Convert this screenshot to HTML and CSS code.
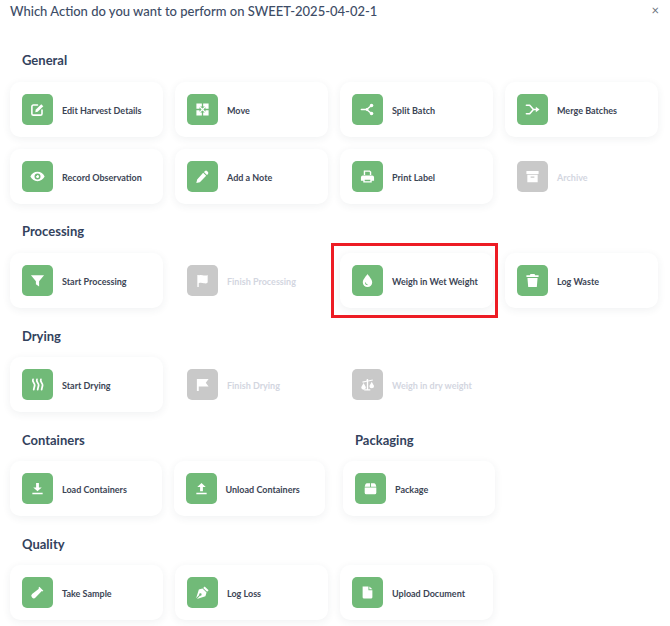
FILE: index.html
```html
<!DOCTYPE html>
<html lang="en">
<head>
<meta charset="utf-8">
<title>Actions</title>
<link rel="stylesheet" href="styles.css">
</head>
<body>
<div class="modal">
  <header class="modal-head">
    <h1 class="modal-title">Which Action do you want to perform on SWEET-2025-04-02-1</h1>
    <span class="close">×</span>
  </header>

  <section class="section first">
    <h2 class="section-title">General</h2>
    <div class="grid">
      <div class="card"><span class="icon"><svg viewBox="0 0 16 16"><path class="line" d="M8 3.200H3.600A1.600 1.600 0 0 0 2 4.800v7.600A1.600 1.600 0 0 0 3.600 14h7.600a1.600 1.600 0 0 0 1.600-1.600V8.600"/><path d="M6 8.300 12 2.300l2.200 2.200-6 6-2.500.3z"/></svg></span><span class="label">Edit Harvest Details</span></div>
      <div class="card"><span class="icon"><svg viewBox="0 0 16 16"><path fill-rule="evenodd" d="M1.500 1.500h13v13h-13zM8 7 5.500 4.800h1.800V1.500h1.400v3.300h1.800zM8 9l2.500 2.200H8.700v3.300H7.300v-3.300H5.500zM7 8 4.800 10.500V8.700H1.500V7.300h3.300V5.500zM9 8l2.200-2.500v1.800h3.300v1.400h-3.300v1.800z"/></svg></span><span class="label">Move</span></div>
      <div class="card"><span class="icon"><svg viewBox="0 0 16 16"><path class="line" d="M1.500 8H7l5-4M7 8l5 4"/><circle cx="12.300" cy="3.800" r="1.900"/><circle cx="12.300" cy="12.200" r="1.900"/><circle cx="7.500" cy="8" r="1.500"/></svg></span><span class="label">Split Batch</span></div>
      <div class="card"><span class="icon"><svg viewBox="0 0 16 16"><path class="line" d="M1.500 3.500H5L9 8l-4 4.500H1.500M9 8h3"/><path d="M11.500 5 15.500 8l-4 3z"/></svg></span><span class="label">Merge Batches</span></div>
      <div class="card"><span class="icon"><svg viewBox="0 0 16 16"><path fill-rule="evenodd" d="M8 3c3.400 0 6.300 2.200 7.600 5-1.300 2.800-4.200 5-7.600 5S1.700 10.800.4 8C1.700 5.200 4.600 3 8 3zm0 1.800a3.200 3.200 0 1 0 0 6.400 3.200 3.200 0 0 0 0-6.400zM8 6.400a1.600 1.600 0 1 1-1.500 1.100c.6.300 1.300-.3 1.100-1z"/></svg></span><span class="label">Record Observation</span></div>
      <div class="card"><span class="icon"><svg viewBox="0 0 16 16"><path d="M10.500 2.300a1.800 1.800 0 0 1 2.500 0l.7.7a1.800 1.800 0 0 1 0 2.500l-1 1-3.200-3.200zM8.700 4.100l3.200 3.200-6.700 6.700-3.800.9.900-3.800z"/></svg></span><span class="label">Add a Note</span></div>
      <div class="card"><span class="icon"><svg viewBox="0 0 16 16"><path fill-rule="evenodd" d="M4 1.500h6.500L12 3v3.500h-1.500V3.500l-.5-.5H5.500v3.500H4zM3 7h10a2 2 0 0 1 2 2v3.500h-2.500V14.500h-9V12.500H1V9a2 2 0 0 1 2-2zm2 4.500v1.500h6v-1.500z"/></svg></span><span class="label">Print Label</span></div>
      <div class="card off"><span class="icon"><svg viewBox="0 0 16 16"><path fill-rule="evenodd" d="M1.500 2h13v3.200h-13zM2.500 6.200h11V14h-11zM6 8v1.200h4V8z"/></svg></span><span class="label">Archive</span></div>
    </div>
  </section>

  <section class="section">
    <h2 class="section-title">Processing</h2>
    <div class="grid">
      <div class="card"><span class="icon"><svg viewBox="0 0 16 16"><path d="M1 2.500h14L9.700 8.800V14.500L6.300 12V8.800z"/></svg></span><span class="label">Start Processing</span></div>
      <div class="card off"><span class="icon"><svg viewBox="0 0 16 16"><path d="M2.500 2h1.500v.6c2-1 4-.3 5.500 0 1.500.3 3 .2 4-.4v8c-1 1-2.500 1-4 .7-1.800-.4-3.800-.8-5.500 0V15H2.500z"/></svg></span><span class="label">Finish Processing</span></div>
      <div class="card marked"><span class="icon"><svg viewBox="0 0 16 16"><path fill-rule="evenodd" d="M8 1c1.500 2.500 5 5.600 5 9a5 5 0 0 1-10 0c0-3.400 3.500-6.500 5-9zM5.200 10.200A2.900 2.900 0 0 0 8 13v-1a1.900 1.900 0 0 1-1.800-1.800z"/></svg></span><span class="label">Weigh in Wet Weight</span></div>
      <div class="card"><span class="icon"><svg viewBox="0 0 16 16"><path d="M5.800 1h4.400l.6 1.300H14.500v1.900h-13V2.300h3.700zM2.600 5.200h10.800l-.8 9.800H3.400z"/></svg></span><span class="label">Log Waste</span></div>
    </div>
  </section>

  <section class="section">
    <h2 class="section-title low">Drying</h2>
    <div class="grid">
      <div class="card"><span class="icon"><svg viewBox="0 0 16 16"><path class="wave" d="M3.200 2.500c-1.300 2.500 2 4 1.800 6.200-.1 1.800-.8 2.500-1 4.800M7.400 2.500c-1.300 2.500 2 4 1.800 6.200-.1 1.800-.8 2.500-1 4.800M11.600 2.500c-1.300 2.500 2 4 1.800 6.200-.1 1.800-.8 2.500-1 4.800"/></svg></span><span class="label">Start Drying</span></div>
      <div class="card off"><span class="icon"><svg viewBox="0 0 16 16"><path d="M2 2h12.500l-3 4 3 4.200H4V15H2z"/></svg></span><span class="label">Finish Drying</span></div>
      <div class="card off"><span class="icon"><svg viewBox="0 0 16 16"><path d="M7.300 2h1.400v1.600l4.800-1 .3 1.100-5.100 1.100V13H11v1.300H4.500V13h2.800V5l-4.500 1-.3-1.100 4.300-1z"/><path d="M3.800 6.500 6.300 11a2.500 2.500 0 0 1-5 0zM12.500 5l2.500 4.500a2.500 2.500 0 0 1-5 0z"/></svg></span><span class="label">Weigh in dry weight</span></div>
    </div>
  </section>

  <div class="split">
    <section class="section">
      <h2 class="section-title low">Containers</h2>
      <div class="pair">
        <div class="card"><span class="icon"><svg viewBox="0 0 16 16"><path d="M6.500 2h3v4.800h3L8 11 3.500 6.800h3zM2.500 12.500h11V14h-11z"/></svg></span><span class="label">Load Containers</span></div>
        <div class="card"><span class="icon"><svg viewBox="0 0 16 16"><path d="M8 2l4.500 4.500h-3v4.300h-3V6.500h-3zM2.500 12.500h11V14h-11z"/></svg></span><span class="label">Unload Containers</span></div>
      </div>
    </section>
    <section class="section solo">
      <h2 class="section-title low">Packaging</h2>
      <div class="card"><span class="icon"><svg viewBox="0 0 16 16"><path d="M4 2.500h3.500V6H1.800l.7-2.200A2 2 0 0 1 4 2.500zM8.500 2.500H12a2 2 0 0 1 1.500 1.300l.7 2.200H8.500zM1.800 7h12.400v5.500a1.700 1.700 0 0 1-1.700 1.700h-9a1.700 1.700 0 0 1-1.700-1.700z"/></svg></span><span class="label">Package</span></div>
    </section>
  </div>

  <section class="section">
    <h2 class="section-title low">Quality</h2>
    <div class="grid">
      <div class="card"><span class="icon"><svg viewBox="0 0 16 16"><path d="M10 1.800l4.200 4.200-1 1-.6-.5-6.700 6.900a2.600 2.600 0 0 1-3.700-3.700L9.500 3.900 9 3.200z"/></svg></span><span class="label">Take Sample</span></div>
      <div class="card"><span class="icon"><svg viewBox="0 0 16 16"><path fill-rule="evenodd" d="M10.300 1.500l4.200 4.200-1.600 1.600-4.200-4.200zM8 3.700l4.300 4.300-1.200 3.900L2 14.800l3.300-3.400a1.300 1.300 0 1 0-.8-.8L1.200 14 4.100 4.900z"/></svg></span><span class="label">Log Loss</span></div>
      <div class="card"><span class="icon"><svg viewBox="0 0 16 16"><path d="M3 1.500h6v4h4.200V13a1.500 1.500 0 0 1-1.500 1.500H4.300A1.500 1.500 0 0 1 2.800 13V1.700zM10 1.600l3.200 3h-3.200z"/></svg></span><span class="label">Upload Document</span></div>
    </div>
  </section>
</div>
</body>
</html>
```
FILE: styles.css
```css
* { box-sizing: border-box; margin: 0; padding: 0; }
html, body { background: #fff; }
body { width: 670px; height: 626px; overflow: hidden; font-family: Lato, "Open Sans", sans-serif; }
.modal { padding: 0 12px 0 10px; }
.modal-head { height: 21px; display: flex; align-items: center; justify-content: space-between; }
.modal-title { font-size: 13px; font-weight: 500; color: #3d4c66; white-space: nowrap; }
.close { font-size: 13px; color: #6b7280; margin-right: -1px; line-height: 1; }
.section.first { margin-top: 30px; }
.section { margin-top: 18px; }
.section-title { font-size: 13px; line-height: 19px; height: 20px; font-weight: 700; color: #33425d; padding-left: 12px; margin-bottom: 11px; }
.section-title.low { padding-top: 1px; }
.grid { display: grid; grid-template-columns: repeat(4, 153px); gap: 12px; }
.pair { display: grid; grid-template-columns: repeat(2, 151.5px); gap: 12px; }
.split { display: flex; gap: 18px; }
.solo { width: 151.5px; }
.card { position: relative; height: 55px; display: flex; align-items: center; gap: 9px; padding: 0 12px; background: #fff; border-radius: 10px; box-shadow: 0 2px 8px rgba(40, 50, 70, .07); }
.card.off { box-shadow: none; }
.icon { width: 31px; height: 31px; flex: none; display: flex; align-items: center; justify-content: center; background: #71ba78; border-radius: 5px; }
.off .icon { background: #c9c9c9; }
.icon svg { width: 15px; height: 15px; fill: #fff; }
.icon svg .line { fill: none; stroke: #fff; stroke-width: 1.7; stroke-linecap: round; stroke-linejoin: round; }
.icon svg .wave { fill: none; stroke: #fff; stroke-width: 1.9; stroke-linecap: round; }
.label { font-size: 9px; font-weight: 700; color: #3c4555; white-space: nowrap; padding-top: 1px; }
.off .label { color: #d3d6df; }
.marked::after { content: ""; position: absolute; left: -9px; right: -5px; top: -10px; bottom: -10px; border: 3px solid #ed1c24; }
```
